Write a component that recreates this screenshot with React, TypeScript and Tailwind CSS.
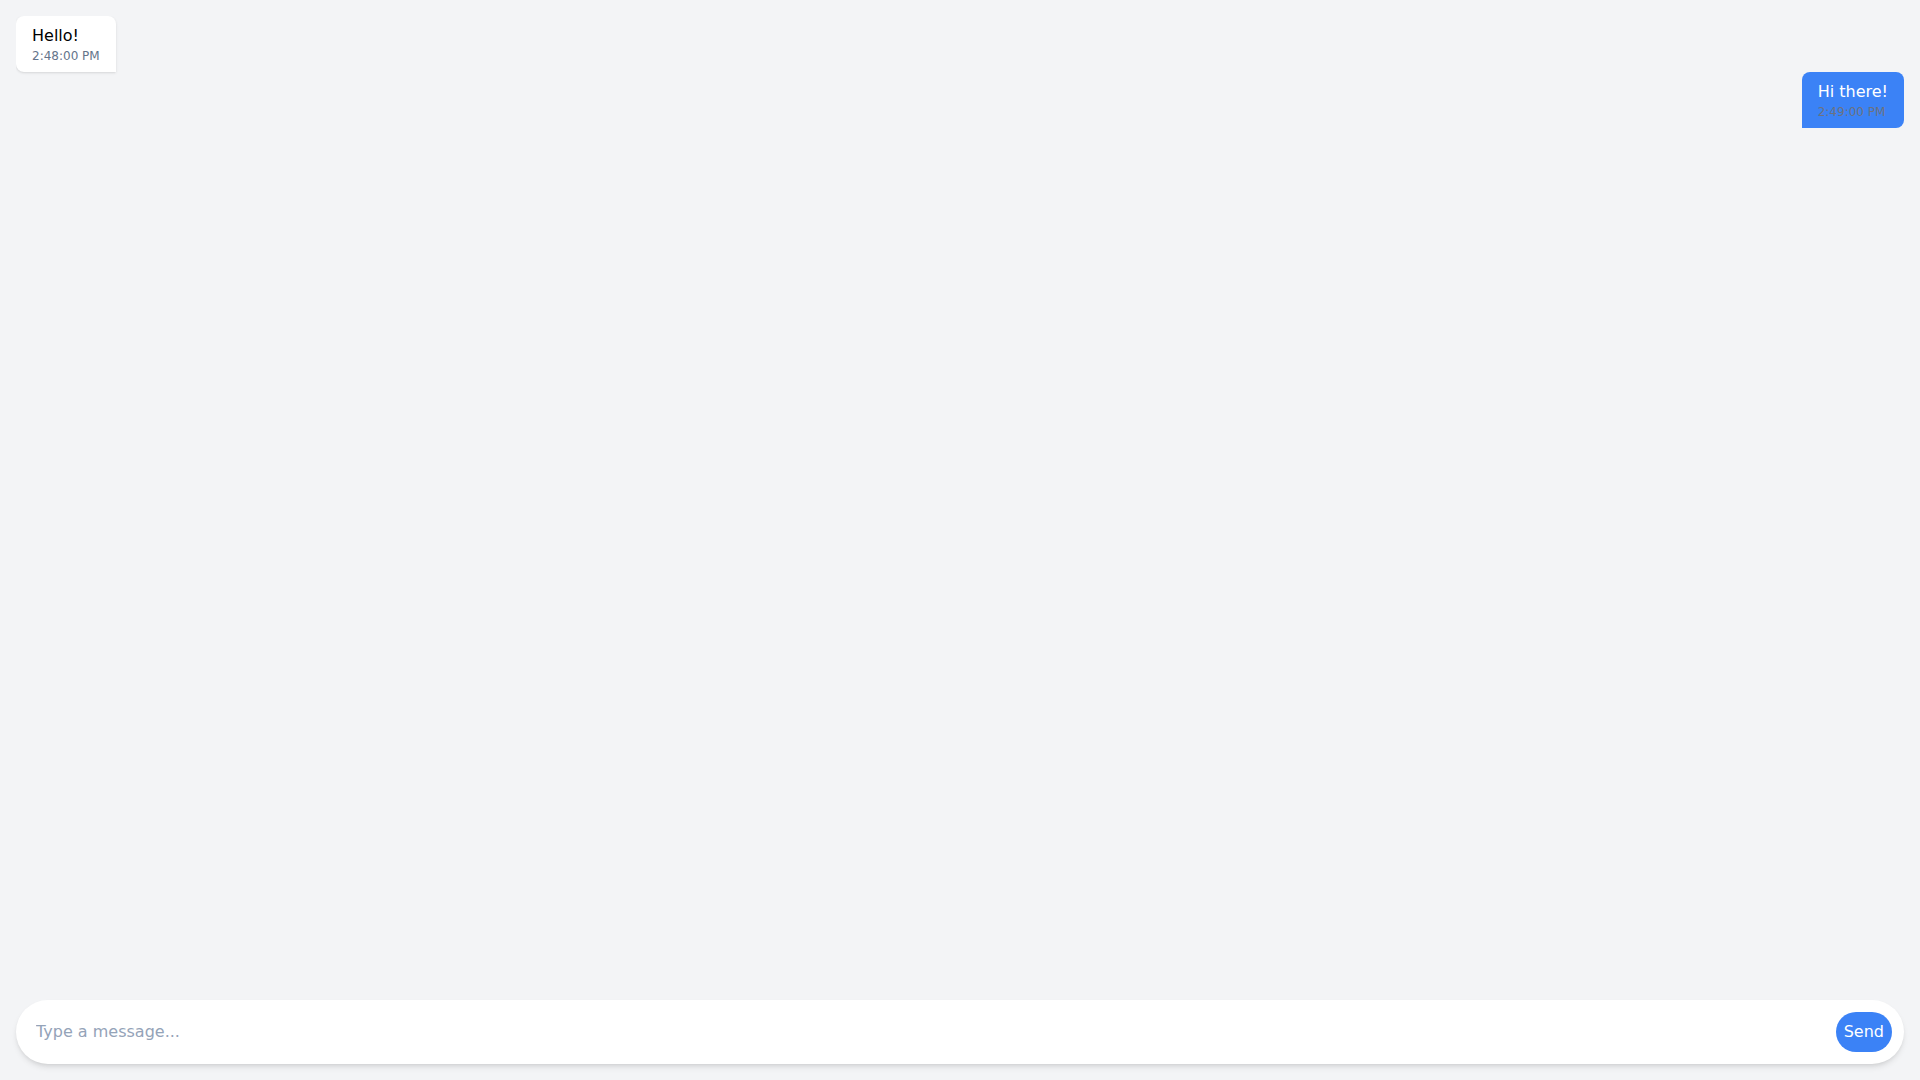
import React, { useState } from 'react';

type Message = {
  id: number;
  text: string;
  time: string;
  mine: boolean;
};

const messages: Message[] = [
  { id: 1, text: 'Hello!', time: '2:48:00 PM', mine: false },
  { id: 2, text: 'Hi there!', time: '2:49:00 PM', mine: true },
];

export default function App() {
  const [draft, setDraft] = useState('');

  return (
    <div className="h-screen flex flex-col bg-[#f3f4f6] p-4 font-['DejaVu_Sans',sans-serif]">
      {/* message list */}
      <div className="flex-1 flex flex-col overflow-y-auto">
        {messages.map((m) => (
          <div key={m.id} className={`flex ${m.mine ? 'justify-end' : 'justify-start'}`}>
            <div
              className={
                m.mine
                  ? 'bg-[#3b82f6] text-white rounded-lg rounded-bl-none px-4 py-2'
                  : 'bg-white text-black rounded-lg rounded-br-none px-4 py-2 shadow-sm'
              }
            >
              <p className="text-base leading-6">{m.text}</p>
              <p className={`text-xs leading-4 ${m.mine ? 'text-[#6b7280]' : 'text-[#64748b]'}`}>
                {m.time}
              </p>
            </div>
          </div>
        ))}
      </div>

      {/* composer */}
      <div className="flex items-center bg-white rounded-full shadow-md p-3">
        <input
          value={draft}
          onChange={(e) => setDraft(e.target.value)}
          placeholder="Type a message..."
          className="flex-1 px-2 text-base outline-none bg-transparent placeholder:text-[#94a3b8]"
        />
        <button className="bg-[#3b82f6] text-white rounded-full px-2 py-2 text-base leading-6">
          Send
        </button>
      </div>
    </div>
  );
}
